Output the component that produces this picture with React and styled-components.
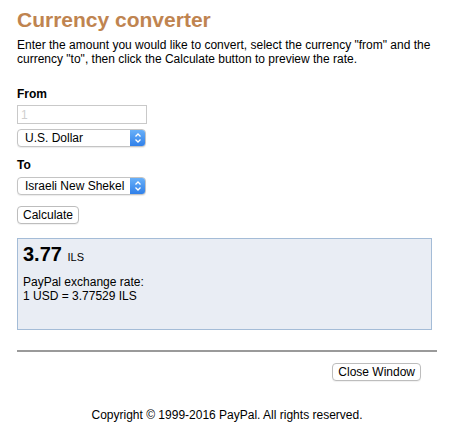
import React from "react";
import styled, { createGlobalStyle } from "styled-components";

const GlobalStyle = createGlobalStyle`
  body {
    margin: 0;
    background: #ffffff;
    font-family: "Liberation Sans", Arial, sans-serif;
    color: #000;
  }
`;

const Page = styled.div`
  width: 420px;
  padding: 8px 17px 0;
`;

const Title = styled.h1`
  margin: 0;
  font-size: 21px;
  line-height: 24px;
  font-weight: bold;
  color: #bf8450;
`;

const Intro = styled.p`
  margin: 6px 0 0;
  font-size: 12px;
  line-height: 14px;
`;

const Form = styled.div`
  display: flex;
  flex-direction: column;
  align-items: flex-start;
  margin-top: 21px;
`;

const Label = styled.div`
  font-size: 12px;
  line-height: 15px;
  font-weight: bold;
  margin-top: ${(p) => p.$top || 0}px;
`;

const Input = styled.input`
  box-sizing: border-box;
  width: 130px;
  height: 19px;
  margin-top: 3px;
  padding: 0 3px;
  border: 1px solid #c9c9c9;
  font-family: inherit;
  font-size: 12px;
  &::placeholder {
    color: #cfcfcf;
  }
`;

const Select = styled.div`
  box-sizing: border-box;
  display: flex;
  align-items: center;
  justify-content: space-between;
  width: 129px;
  height: 18px;
  margin-top: ${(p) => p.$top}px;
  border: 1px solid #c4c4c4;
  border-radius: 4px;
  box-shadow: 0 1px 1px rgba(0, 0, 0, 0.08);
  background: #fff;
  font-size: 12px;
  overflow: hidden;
`;

const SelectText = styled.span`
  padding-left: 7px;
`;

const Arrows = styled.span`
  display: flex;
  align-items: center;
  justify-content: center;
  width: 16px;
  height: 18px;
  margin-right: -1px;
  background: linear-gradient(#6cb3fa, #2d7de8);
  border-radius: 0 4px 4px 0;
`;

const Button = styled.button`
  height: 18px;
  padding: 0 5px;
  border: 1px solid #bdbdbd;
  border-radius: 4px;
  background: #fff;
  box-shadow: 0 1px 1px rgba(0, 0, 0, 0.06);
  font-family: "Liberation Sans", Arial, sans-serif;
  font-size: 12px;
  line-height: 16px;
  color: #000;
  margin-top: ${(p) => p.$top || 0}px;
`;

const Result = styled.div`
  margin: 14px 5px 0 0;
  padding: 3px 5px 26px;
  background: #e9edf4;
  border: 1px solid #a4bcd7;
`;

const Amount = styled.div`
  font-size: 20px;
  line-height: 24px;
  font-weight: bold;

  span {
    font-size: 11px;
    font-weight: normal;
  }
`;

const Rate = styled.div`
  margin-top: 6px;
  font-size: 12px;
  line-height: 14px;
`;

const Rule = styled.hr`
  margin: 20px 0 0;
  border: none;
  height: 2px;
  background: #9a9a9a;
`;

const Actions = styled.div`
  display: flex;
  justify-content: flex-end;
  padding-right: 16px;
  margin-top: 11px;
`;

const Footer = styled.div`
  margin-top: 27px;
  text-align: center;
  font-size: 12px;
  line-height: 15px;
`;

const Chevrons = () => (
  <svg width="8" height="12" viewBox="0 0 8 12">
    <path d="M1.5 4.5 L4 2 L6.5 4.5 M1.5 7.5 L4 10 L6.5 7.5" fill="none" stroke="#fff" strokeWidth="1.3" />
  </svg>
);

export default function App() {
  return (
    <Page>
      <GlobalStyle />
      <Title>Currency converter</Title>
      <Intro>
        Enter the amount you would like to convert, select the currency "from" and the
        currency "to", then click the Calculate button to preview the rate.
      </Intro>
      <Form>
        <Label>From</Label>
        <Input placeholder="1" />
        <Select $top={5}>
          <SelectText>U.S. Dollar</SelectText>
          <Arrows>
            <Chevrons />
          </Arrows>
        </Select>
        <Label $top={11}>To</Label>
        <Select $top={4}>
          <SelectText>Israeli New Shekel</SelectText>
          <Arrows>
            <Chevrons />
          </Arrows>
        </Select>
        <Button $top={11}>Calculate</Button>
      </Form>
      <Result>
        <Amount>
          3.77 <span>ILS</span>
        </Amount>
        <Rate>
          PayPal exchange rate:
          <br />1 USD = 3.77529 ILS
        </Rate>
      </Result>
      <Rule />
      <Actions>
        <Button>Close Window</Button>
      </Actions>
      <Footer>Copyright © 1999-2016 PayPal. All rights reserved.</Footer>
    </Page>
  );
}
